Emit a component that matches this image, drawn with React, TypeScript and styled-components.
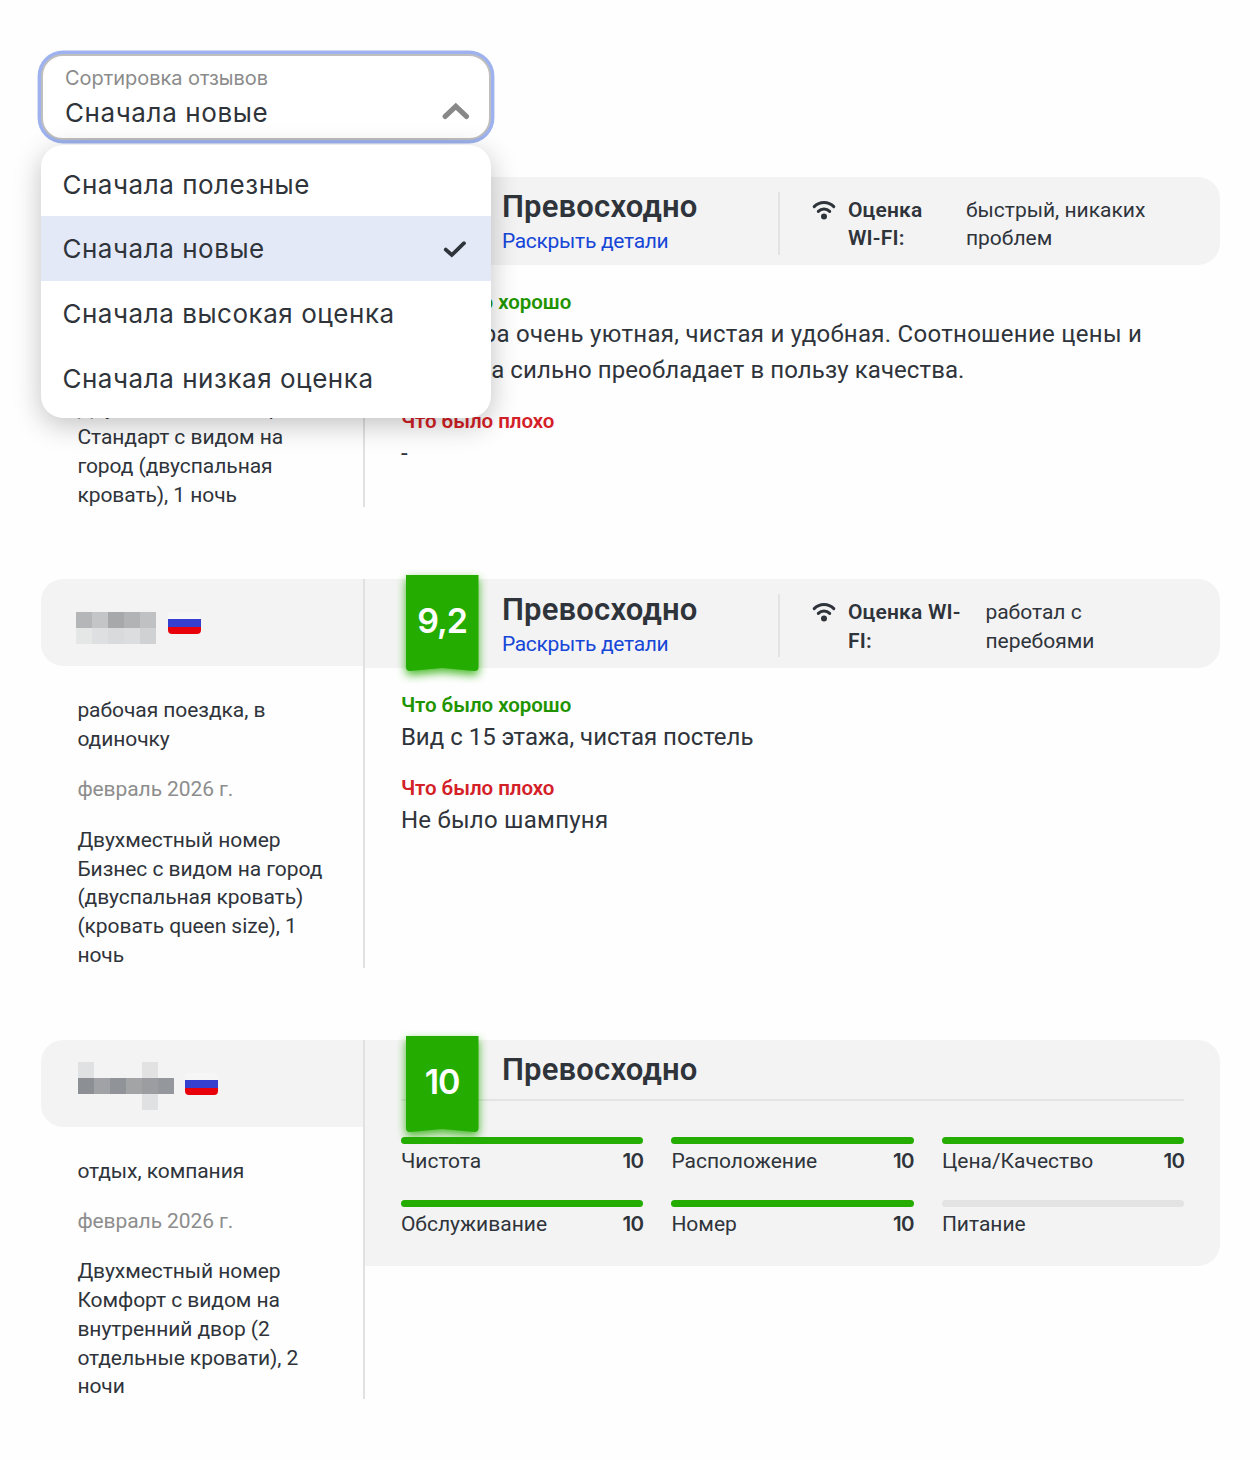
import React from "react";
import styled, { createGlobalStyle } from "styled-components";

const ink = "#2f343b";
const green = "#24ad00";
const wideFont = `Inter, "Liberation Sans", sans-serif`;

const GlobalStyle = createGlobalStyle`
  * { box-sizing: border-box; }
  body {
    margin: 0;
    background: #fefefe;
    color: ${ink};
    font-family: Roboto, "Liberation Sans", sans-serif;
  }
`;

const Page = styled.main`
  width: 1260px;
  height: 1460px;
  padding: 54px 40px 0 41.4px;
  overflow: hidden;
`;

const SortField = styled.div`
  position: relative;
  width: 449.5px;
`;

const SortControl = styled.div`
  display: flex;
  align-items: flex-end;
  justify-content: space-between;
  height: 86.4px;
  padding: 0 18.5px 5px 21.5px;
  border: 2px solid #bfbfbf;
  border-radius: 22px;
  box-shadow: 0 0 0 3.4px #9db2ee;
  background: #fff;
`;

const SortCaption = styled.div`
  color: #8b8b8b;
  font-family: ${wideFont};
  font-size: 20px;
  line-height: 28px;
  letter-spacing: -0.03px;
`;

const SortValue = styled.div`
  font-family: ${wideFont};
  font-size: 26px;
  line-height: 41px;
  letter-spacing: 0.62px;
`;

const ChevronIcon = styled.svg`
  display: block;
  width: 28px;
  height: 18px;
  margin-bottom: 13.5px;
`;

const Menu = styled.ul`
  position: absolute;
  top: 90.5px;
  left: 0;
  z-index: 5;
  width: 449.5px;
  margin: 0;
  padding: 7.2px 0;
  list-style: none;
  border-radius: 22px;
  background: #fff;
  box-shadow: 0 7px 28px rgba(0, 0, 0, 0.24);
`;

const MenuItem = styled.li<{ $selected?: boolean }>`
  display: flex;
  align-items: center;
  justify-content: space-between;
  height: 64.7px;
  padding: 0 24px 0 21px;
  font-family: ${wideFont};
  font-size: 26px;
  letter-spacing: 0.54px;
  background: ${(p) => (p.$selected ? "#e4e9f8" : "transparent")};
`;

const CheckIcon = styled.svg`
  width: 24px;
  height: 18px;
`;

const Reviews = styled.section`
  display: flex;
  flex-direction: column;
  gap: 72px;
  margin-top: 36.2px;
`;

const ReviewRow = styled.article`
  display: grid;
  grid-template-columns: 323.5px 855.5px;
`;

const Guest = styled.aside`
  border-right: 2px solid #e1e1e1;
`;

const GuestHead = styled.header`
  display: flex;
  align-items: center;
  height: 87px;
  padding-left: 34.5px;
  border-radius: 22px 0 0 22px;
  background: #f3f3f3;
`;

const GuestInfo = styled.div`
  display: flex;
  flex-direction: column;
  gap: 21.6px;
  margin-bottom: -2.3px;
  padding: 30px 36px 0;
  font-size: 21px;
  line-height: 28.8px;
`;

const InfoLine = styled.div<{ $muted?: boolean }>`
  min-height: 28.8px;
  color: ${(p) => (p.$muted ? "#8d8d8d" : ink)};
  letter-spacing: ${(p) => (p.$muted ? -0.08 : -0.06)}px;
`;

const Mosaic = styled.div<{ $cols: number; $left: number; $top: number }>`
  display: grid;
  grid-template-columns: repeat(${(p) => p.$cols}, 16px);
  grid-auto-rows: 16px;
  margin: ${(p) => p.$top}px 0 0 ${(p) => p.$left}px;
`;

const Tile = styled.span<{ $tone: string }>`
  background: ${(p) => p.$tone};
`;

const Flag = styled.span<{ $gap: number }>`
  width: 33px;
  height: 22px;
  margin: 1px 0 0 ${(p) => p.$gap}px;
  border-radius: 4px;
  background: linear-gradient(#f6f6f6 0 7.3px, #3540cf 7.3px 15px, #e8000b 15px);
`;

const Body = styled.div`
  min-width: 0;
`;

const Summary = styled.header`
  min-height: 88.5px;
  padding: 0 36px;
  border-radius: 0 22px 22px 0;
  background: #f3f3f3;
`;

const SummaryTop = styled.div<{ $ruled?: boolean }>`
  display: flex;
  align-items: flex-start;
  height: ${(p) => (p.$ruled ? "61.3px" : "88.5px")};
  border-bottom: ${(p) => (p.$ruled ? "2px solid #e3e3e3" : "0")};
`;

const Badge = styled.div`
  position: relative;
  flex: none;
  width: 72.5px;
  height: 96px;
  margin: -3.8px 23.5px 0 5px;
`;

const BadgeShape = styled.svg`
  display: block;
  width: 72.5px;
  height: 96px;
  overflow: visible;
  filter: drop-shadow(0 4px 5px rgba(36, 173, 0, 0.85));
`;

const BadgeScore = styled.strong`
  position: absolute;
  inset: 0 0 5px;
  display: flex;
  align-items: center;
  justify-content: center;
  color: #fff;
  font-family: ${wideFont};
  font-size: 34px;
  font-weight: 600;
  letter-spacing: -1px;
`;

const Verdict = styled.div`
  width: 276px;
  padding-top: 10.5px;
`;

const VerdictTitle = styled.h3`
  margin: 0;
  font-size: 31px;
  font-weight: 600;
  line-height: 40px;
  letter-spacing: 0.2px;
`;

const DetailsLink = styled.a`
  display: block;
  color: #1646d8;
  font-size: 21px;
  line-height: 28.8px;
  letter-spacing: -0.3px;
`;

const Wifi = styled.div`
  display: flex;
  align-items: flex-start;
  flex: 1;
  height: 63px;
  margin-top: 15px;
  padding: 4px 0 0 33px;
  border-left: 2px solid #e3e3e3;
  font-size: 21px;
  line-height: 28.8px;
`;

const WifiIcon = styled.svg`
  flex: none;
  width: 24px;
  height: 20px;
  margin: 4px 12px 0 -1px;
`;

const WifiLabel = styled.strong<{ $width: number }>`
  flex: none;
  width: ${(p) => p.$width}px;
  padding-right: 18px;
  font-weight: 600;
  letter-spacing: 0.2px;
`;

const WifiValue = styled.span`
  flex: 1;
`;

const Comments = styled.div`
  display: flex;
  flex-direction: column;
  gap: 18px;
  padding: 23.4px 36px 0;
`;

const CommentTitle = styled.h4<{ $tone: string }>`
  margin: 0;
  color: ${(p) => p.$tone};
  font-size: 20.5px;
  font-weight: 600;
  line-height: 28.8px;
  letter-spacing: -0.03px;
`;

const CommentText = styled.p`
  margin: -1px 0 1px;
  font-size: 24px;
  line-height: 36px;
`;

const CommentLine = styled.span<{ $track?: number }>`
  display: block;
  letter-spacing: ${(p) => p.$track ?? 0}px;
`;

const Scores = styled.div`
  display: grid;
  grid-template-columns: repeat(3, 1fr);
  gap: 26.5px 28px;
  padding: 36px 0 29.5px;
`;

const ScoreBar = styled.div<{ $filled: boolean }>`
  height: 7.5px;
  margin-bottom: 2.5px;
  border-radius: 4px;
  background: ${(p) => (p.$filled ? green : "#e3e3e3")};
`;

const ScoreCaption = styled.div`
  display: flex;
  justify-content: space-between;
  height: 26.5px;
  font-size: 21px;
  line-height: 28.8px;
`;

const ScoreValue = styled.strong`
  font-family: ${wideFont};
  font-size: 20.5px;
  font-weight: 600;
  letter-spacing: -0.6px;
`;

type Mask = { cols: number; left: number; top: number; gap: number; tiles: string[] };
type Line = { text: string; track?: number };

type Review = {
  mask: Mask;
  trip?: string;
  date?: string;
  room: string;
  score: string;
  wifi?: { width: number; value: string };
  good?: Line[];
  bad?: Line[];
  details?: { name: string; value?: string }[];
};

const t = "transparent";

const shortMask: Mask = {
  cols: 5,
  left: 0,
  top: 11,
  gap: 12,
  tiles: [
    "#b4b6b8", "#c3c5c7", "#a6a8aa", "#b1b3b5", "#bfc1c3",
    "#e5e6e6", "#dedfe0", "#d8dadb", "#dcddde", "#cfd1d3",
  ],
};

const longMask: Mask = {
  cols: 6,
  left: 2,
  top: 5,
  gap: 11,
  tiles: [
    "#e0e1e2", t, t, t, "#e2e2e3", t,
    "#8c8f93", "#a0a2a5", "#909397", "#a2a4a6", "#9b9da0", "#94979b",
    t, t, t, t, "#e0e1e2", t,
  ],
};

const reviews: Review[] = [
  {
    mask: shortMask,
    room: "Двухместный номер Стандарт с видом на город (двуспальная кровать), 1 ночь",
    score: "10",
    wifi: { width: 118, value: "быстрый, никаких проблем" },
    good: [
      { text: "Квартира очень уютная, чистая и удобная. Соотношение цены и", track: 0.28 },
      { text: "качества сильно преобладает в пользу качества.", track: 0.09 },
    ],
    bad: [{ text: "-" }],
  },
  {
    mask: shortMask,
    trip: "рабочая поездка, в одиночку",
    date: "февраль 2026 г.",
    room: "Двухместный номер Бизнес с видом на город (двуспальная кровать) (кровать queen size), 1 ночь",
    score: "9,2",
    wifi: { width: 137.5, value: "работал с перебоями" },
    good: [{ text: "Вид с 15 этажа, чистая постель" }],
    bad: [{ text: "Не было шампуня", track: 0.25 }],
  },
  {
    mask: longMask,
    trip: "отдых, компания",
    date: "февраль 2026 г.",
    room: "Двухместный номер Комфорт с видом на внутренний двор (2 отдельные кровати), 2 ночи",
    score: "10",
    details: [
      { name: "Чистота", value: "10" },
      { name: "Расположение", value: "10" },
      { name: "Цена/Качество", value: "10" },
      { name: "Обслуживание", value: "10" },
      { name: "Номер", value: "10" },
      { name: "Питание" },
    ],
  },
];

const options = ["Сначала полезные", "Сначала новые", "Сначала высокая оценка", "Сначала низкая оценка"];
const selected = "Сначала новые";

function SortSelect() {
  return (
    <SortField>
      <SortControl>
        <div>
          <SortCaption>Сортировка отзывов</SortCaption>
          <SortValue>{selected}</SortValue>
        </div>
        <ChevronIcon viewBox="0 0 28 18" fill="none" stroke="#888" strokeWidth="5.2" strokeLinecap="round" strokeLinejoin="miter">
          <path d="M3.2 14.4 13.8 4.4 24.4 14.4" />
        </ChevronIcon>
      </SortControl>
      <Menu>
        {options.map((option) => (
          <MenuItem key={option} $selected={option === selected}>
            {option}
            {option === selected && (
              <CheckIcon viewBox="0 0 24 18" fill="none" stroke={ink} strokeWidth="3.8" strokeLinecap="round" strokeLinejoin="miter">
                <path d="M2.8 9.6 8.8 15 21 3.2" />
              </CheckIcon>
            )}
          </MenuItem>
        ))}
      </Menu>
    </SortField>
  );
}

function ScoreBadge({ score }: { score: string }) {
  return (
    <Badge>
      <BadgeShape viewBox="0 0 72.5 96">
        <path fill={green} d="M0 0H72.5V92Q72.5 96 68.5 95.9L36.25 93 4 95.9Q0 96 0 92Z" />
      </BadgeShape>
      <BadgeScore>{score}</BadgeScore>
    </Badge>
  );
}

function WifiRating({ width, value }: { width: number; value: string }) {
  return (
    <Wifi>
      <WifiIcon viewBox="0 0 24 20" fill="none" stroke={ink} strokeWidth="3" strokeLinecap="round">
        <path d="M2.2 6.6C7.6 1.1 16.4 1.1 21.8 6.6" />
        <path d="M6.3 11.4C9.5 8.2 14.5 8.2 17.7 11.4" />
        <circle cx="12" cy="16.4" r="3" fill={ink} stroke="none" />
      </WifiIcon>
      <WifiLabel $width={width}>Оценка WI-FI:</WifiLabel>
      <WifiValue>{value}</WifiValue>
    </Wifi>
  );
}

function Comment({ title, tone, lines }: { title: string; tone: string; lines: Line[] }) {
  return (
    <div>
      <CommentTitle $tone={tone}>{title}</CommentTitle>
      <CommentText>
        {lines.map((line) => (
          <CommentLine key={line.text} $track={line.track}>
            {line.text}
          </CommentLine>
        ))}
      </CommentText>
    </div>
  );
}

function ReviewCard({ review }: { review: Review }) {
  const { mask, details, wifi, good, bad } = review;
  return (
    <ReviewRow>
      <Guest>
        <GuestHead>
          <Mosaic $cols={mask.cols} $left={mask.left} $top={mask.top}>
            {mask.tiles.map((tone, i) => (
              <Tile key={i} $tone={tone} />
            ))}
          </Mosaic>
          <Flag $gap={mask.gap} />
        </GuestHead>
        <GuestInfo>
          <InfoLine>{review.trip}</InfoLine>
          <InfoLine $muted>{review.date}</InfoLine>
          <InfoLine>{review.room}</InfoLine>
        </GuestInfo>
      </Guest>
      <Body>
        <Summary>
          <SummaryTop $ruled={Boolean(details)}>
            <ScoreBadge score={review.score} />
            <Verdict>
              <VerdictTitle>Превосходно</VerdictTitle>
              {!details && <DetailsLink>Раскрыть детали</DetailsLink>}
            </Verdict>
            {wifi && <WifiRating width={wifi.width} value={wifi.value} />}
          </SummaryTop>
          {details && (
            <Scores>
              {details.map(({ name, value }) => (
                <div key={name}>
                  <ScoreBar $filled={Boolean(value)} />
                  <ScoreCaption>
                    <span>{name}</span>
                    <ScoreValue>{value}</ScoreValue>
                  </ScoreCaption>
                </div>
              ))}
            </Scores>
          )}
        </Summary>
        {good && bad && (
          <Comments>
            <Comment title="Что было хорошо" tone="#1f9400" lines={good} />
            <Comment title="Что было плохо" tone="#d42027" lines={bad} />
          </Comments>
        )}
      </Body>
    </ReviewRow>
  );
}

export default function App() {
  return (
    <>
      <GlobalStyle />
      <Page>
        <SortSelect />
        <Reviews>
          {reviews.map((review, i) => (
            <ReviewCard key={i} review={review} />
          ))}
        </Reviews>
      </Page>
    </>
  );
}
